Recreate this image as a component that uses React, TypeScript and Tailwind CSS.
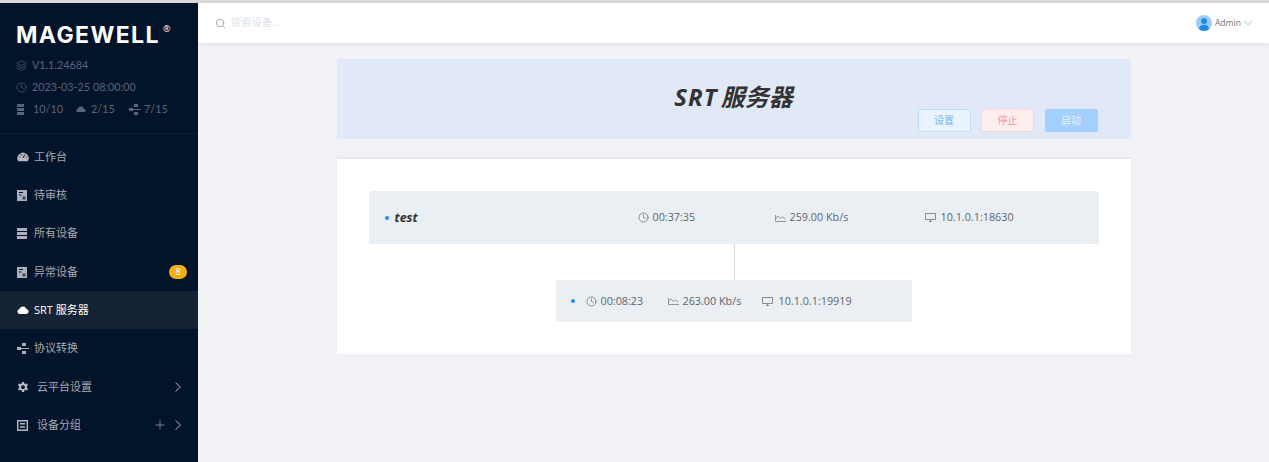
import React from 'react';
import { ChevronDown, Clock, Layers, Plus, Search } from 'lucide-react';

const sans = "font-['Open_Sans','Noto_Sans_CJK_SC',sans-serif]";

const GaugeIcon = () => (
  <svg width="12" height="12" viewBox="0 0 12 12" className="shrink-0">
    <path d="M1.2 10.2A5.6 5.6 0 1 1 10.8 10.2Z" fill="#b3b9c3" />
    <path d="M6 6.8 7.8 3.6" stroke="#021429" strokeWidth="1" />
    <circle cx="2.8" cy="6" r=".6" fill="#021429" />
    <circle cx="4.2" cy="3.6" r=".6" fill="#021429" />
    <circle cx="9.2" cy="6" r=".6" fill="#021429" />
  </svg>
);

const DocIcon = () => (
  <svg width="10" height="11" viewBox="0 0 10 11" className="shrink-0">
    <rect width="10" height="11" fill="#aab1bc" />
    <path d="M2 2.5h4M2 5h2.5" stroke="#021429" strokeWidth="1" />
    <rect x="5.5" y="6.5" width="3" height="3" fill="#3c4a5c" />
  </svg>
);

const ServerIcon = ({ color = '#aab1bc', w = 10 }: { color?: string; w?: number }) => (
  <svg width={w} height="11" viewBox="0 0 10 11" preserveAspectRatio="none" className="shrink-0">
    <rect y="0" width="10" height="3" fill={color} />
    <rect y="4" width="10" height="3" fill={color} />
    <rect y="8" width="10" height="3" fill={color} />
  </svg>
);

const CloudIcon = ({ color = '#fff', w = 12 }: { color?: string; w?: number }) => (
  <svg width={w} height={(w * 8) / 12} viewBox="0 0 12 8" className="shrink-0">
    <path
      d="M2.6 8A2.5 2.5 0 0 1 2.3 3.1 3.8 3.8 0 0 1 9.4 2.9 2.6 2.6 0 0 1 9.6 8Z"
      fill={color}
    />
  </svg>
);

const FlowIcon = ({ color = '#aab1bc' }: { color?: string }) => (
  <svg width="12" height="11" viewBox="0 0 12 11" className="shrink-0">
    <rect x="5" y="0" width="4" height="3" fill={color} />
    <rect x="0" y="4" width="4" height="3" fill={color} />
    <rect x="5" y="8" width="4" height="3" fill={color} />
    <path d="M4 5.5h8" stroke={color} strokeWidth="1" />
  </svg>
);

const GearIcon = () => (
  <svg width="12" height="12" viewBox="0 0 12 12" className="shrink-0">
    <path
      fillRule="evenodd"
      d="M5 0h2l.3 1.5 1.2.6L10 1.5l1 1.7-1.1 1.1v1.4L11 6.8l-1 1.7-1.5-.6-1.2.6L7 10H5l-.3-1.5-1.2-.6-1.5.6-1-1.7 1.1-1.1V4.3L1 3.2l1-1.7 1.5.6 1.2-.6ZM6 3.3a1.9 1.9 0 1 0 0 3.8 1.9 1.9 0 0 0 0-3.8Z"
      transform="translate(0 1)"
      fill="#b3b9c3"
    />
  </svg>
);

const GroupIcon = () => (
  <svg width="11" height="11" viewBox="0 0 11 11" className="shrink-0">
    <path d="M.7.7h9.6v9.6H.7ZM3 3.8h5M3 7h5" fill="none" stroke="#b3b9c3" strokeWidth="1.4" />
  </svg>
);

const ArrowIcon = () => (
  <svg width="6" height="10" viewBox="0 0 6 10" fill="none" stroke="#a3a9b3" strokeWidth="1" className="shrink-0">
    <path d="M.5.5 5.5 5 .5 9.5" />
  </svg>
);

const ChartIcon = () => (
  <svg width="11" height="8" viewBox="0 0 11 8" fill="none" stroke="#868c93" strokeWidth=".9" className="shrink-0">
    <path d="M.5 1v6.5h10.5M.5 5 3 2l2.5 2.5L7.5 3 10.5 5" />
  </svg>
);

const ScreenIcon = () => (
  <svg width="11" height="9" viewBox="0 0 11 9" fill="none" stroke="#7b8188" strokeWidth=".9" className="shrink-0">
    <path d="M.5.5h10v6h-10ZM5.5 6.5V8.5M4 8.5h3" />
  </svg>
);

const menu = [
  { label: '工作台', icon: <GaugeIcon />, gap: 'gap-[5px]' },
  { label: '待审核', icon: <DocIcon />, gap: 'gap-[7px]' },
  { label: '所有设备', icon: <ServerIcon />, gap: 'gap-[7px]' },
  { label: '异常设备', icon: <DocIcon />, gap: 'gap-[7px]', badge: '8' },
  { label: 'SRT 服务器', icon: <CloudIcon />, gap: 'gap-[5px]', active: true },
  { label: '协议转换', icon: <FlowIcon />, gap: 'gap-[5px]' },
  { label: '云平台设置', icon: <GearIcon />, gap: 'gap-[8px]', arrow: true },
  { label: '设备分组', icon: <GroupIcon />, gap: 'gap-[9px]', arrow: true, plus: true },
];

function Sidebar() {
  return (
    <aside className="flex w-[198px] shrink-0 flex-col bg-[#021429]">
      <div className="h-[131px] border-b border-[#0c2036] pl-[16px]">
        <div className="flex h-[50px] items-start pt-[20px]">
          <span className="font-['Inter',sans-serif] text-[23px] leading-[24px] font-bold tracking-[1.4px] text-white">
            MAGEWELL
          </span>
          <span className="ml-[3px] text-[9px] leading-[12px] text-white">®</span>
        </div>
        <div className="mt-[6px] flex flex-col gap-[10px] font-['Lato',sans-serif] text-[10.8px] leading-[12px] text-[#56677b]">
          <div className="flex items-center gap-[5px]">
            <Layers size={11} strokeWidth={1.4} />
            V1.1.24684
          </div>
          <div className="flex items-center gap-[5px]">
            <Clock size={11} strokeWidth={1.4} />
            2023-03-25 08:00:00
          </div>
          <div className="flex items-center">
            <span className="ml-[1px]">
              <ServerIcon color="#56677b" w={7} />
            </span>
            <span className="ml-[9px] w-[29px]">10/10</span>
            <span className="ml-[14px]">
              <CloudIcon color="#56677b" w={10} />
            </span>
            <span className="ml-[5px] w-[22px]">2/15</span>
            <span className="ml-[16px]">
              <FlowIcon color="#56677b" />
            </span>
            <span className="ml-[3px]">7/15</span>
          </div>
        </div>
      </div>
      <nav className={`${sans} flex flex-col pt-[4px] text-[11px]`}>
        {menu.map((item) => (
          <div
            key={item.label}
            className={`flex h-[38.3px] items-center pr-[17px] pl-[17px] ${
              item.active ? 'bg-[#142435] text-white' : 'text-[#a3a9b3]'
            } ${item.gap}`}
          >
            {item.icon}
            <span className="flex-1">{item.label}</span>
            {item.badge && (
              <span className="mr-[-6px] flex h-[14px] w-[18px] items-center justify-center rounded-full bg-[#faad14] text-[9px] text-white">
                {item.badge}
              </span>
            )}
            {item.plus && <Plus size={14} strokeWidth={1.2} className="mr-[-1px]" />}
            {item.arrow && <ArrowIcon />}
          </div>
        ))}
      </nav>
    </aside>
  );
}

function Header() {
  return (
    <header className="flex h-[40px] shrink-0 items-center justify-between bg-white pr-[14px] pl-[17px] shadow-[0_1px_4px_rgba(0,21,41,0.08)]">
      <div className="flex items-center gap-[5px]">
        <Search size={11} strokeWidth={1.6} className="text-[#888]" />
        <span className="text-[10.3px] text-[#dfe3ea]">搜索设备...</span>
      </div>
      <div className="flex items-center gap-[3px] text-[8.6px] text-[#777]">
        <svg width="16" height="16" viewBox="0 0 16 16" className="shrink-0">
          <circle cx="8" cy="8" r="8" fill="#9cccf7" />
          <circle cx="8" cy="6" r="3" fill="#1f8ae8" />
          <path d="M2.8 14c.5-3 2.5-4.3 5.2-4.3s4.7 1.3 5.2 4.3a8 8 0 0 1-10.4 0Z" fill="#1f8ae8" />
        </svg>
        Admin
        <ChevronDown size={14} strokeWidth={0.9} className="ml-[-3px]" />
      </div>
    </header>
  );
}

function Stat({ icon, text, className }: { icon: React.ReactNode; text: string; className?: string }) {
  return (
    <div className={`flex items-center gap-[4px] text-[10.8px] text-[#5f656c] ${className ?? ''}`}>
      <span className="flex w-[10px] justify-center">{icon}</span>
      {text}
    </div>
  );
}

const clock = <Clock size={11} strokeWidth={1.3} className="shrink-0 text-[#555]" />;
const chart = <ChartIcon />;
const monitor = <ScreenIcon />;

export default function App() {
  return (
    <div className={`${sans} h-[462px] w-[1269px] overflow-hidden bg-[#f0f2f5]`}>
      <div className="h-[3px] bg-[#d9d9d9]" />
      <div className="flex h-[459px]">
        <Sidebar />
        <div className="flex min-w-0 flex-1 flex-col">
          <Header />
          <main className="mx-auto flex w-[794px] flex-col pt-[16px]">
            <section className="grid h-[80px] grid-cols-[1fr_auto_1fr] items-center bg-[#e1e8f8]">
              <div />
              <h1 className="mb-[4px] text-[24px] leading-[30px] font-bold text-[#333] italic [word-spacing:-3px]">
                <span className="tracking-[1px]">SRT</span> 服务器
              </h1>
              <div className="flex h-full items-end justify-end gap-[10.5px] pr-[33px] pb-[7px] text-[10px]">
                <button className="h-[23px] w-[53px] rounded-[2px] border border-[#bfdcfb] bg-[#e9f3ff] text-[#7ab5f7]">
                  设置
                </button>
                <button className="h-[23px] w-[53px] rounded-[2px] border border-[#fbd5d6] bg-[#ffeeee] text-[#f89a9b]">
                  停止
                </button>
                <button className="h-[23px] w-[53px] rounded-[2px] bg-[#a3d0fd] text-[#e6f2ff]">启动</button>
              </div>
            </section>
            <section className="mt-[18px] flex h-[197px] flex-col items-center border-t-2 border-[#e7e9ed] bg-white pt-[32px]">
              <div className="flex h-[53px] w-[730px] items-center rounded-[3px] bg-[#eaeff4] pl-[16px]">
                <span className="h-[4px] w-[4px] rounded-full bg-[#1890ff]" />
                <span className="ml-[6px] w-[244px] pt-[1px] text-[12.5px] font-bold text-[#333] italic">test</span>
                <Stat icon={clock} text="00:37:35" className="w-[137px]" />
                <Stat icon={chart} text="259.00 Kb/s" className="w-[150px]" />
                <Stat icon={monitor} text="10.1.0.1:18630" className="gap-[5px]" />
              </div>
              <div className="ml-[2px] h-[36px] w-px bg-[#d9d9d9]" />
              <div className="flex h-[42px] w-[356px] items-center rounded-[3px] bg-[#eaeff4] pl-[15px]">
                <span className="h-[4px] w-[4px] rounded-full bg-[#1890ff]" />
                <Stat icon={clock} text="00:08:23" className="ml-[12px] w-[82px]" />
                <Stat icon={chart} text="263.00 Kb/s" className="w-[94px]" />
                <Stat icon={monitor} text="10.1.0.1:19919" className="gap-[6px]" />
              </div>
            </section>
          </main>
        </div>
      </div>
    </div>
  );
}
